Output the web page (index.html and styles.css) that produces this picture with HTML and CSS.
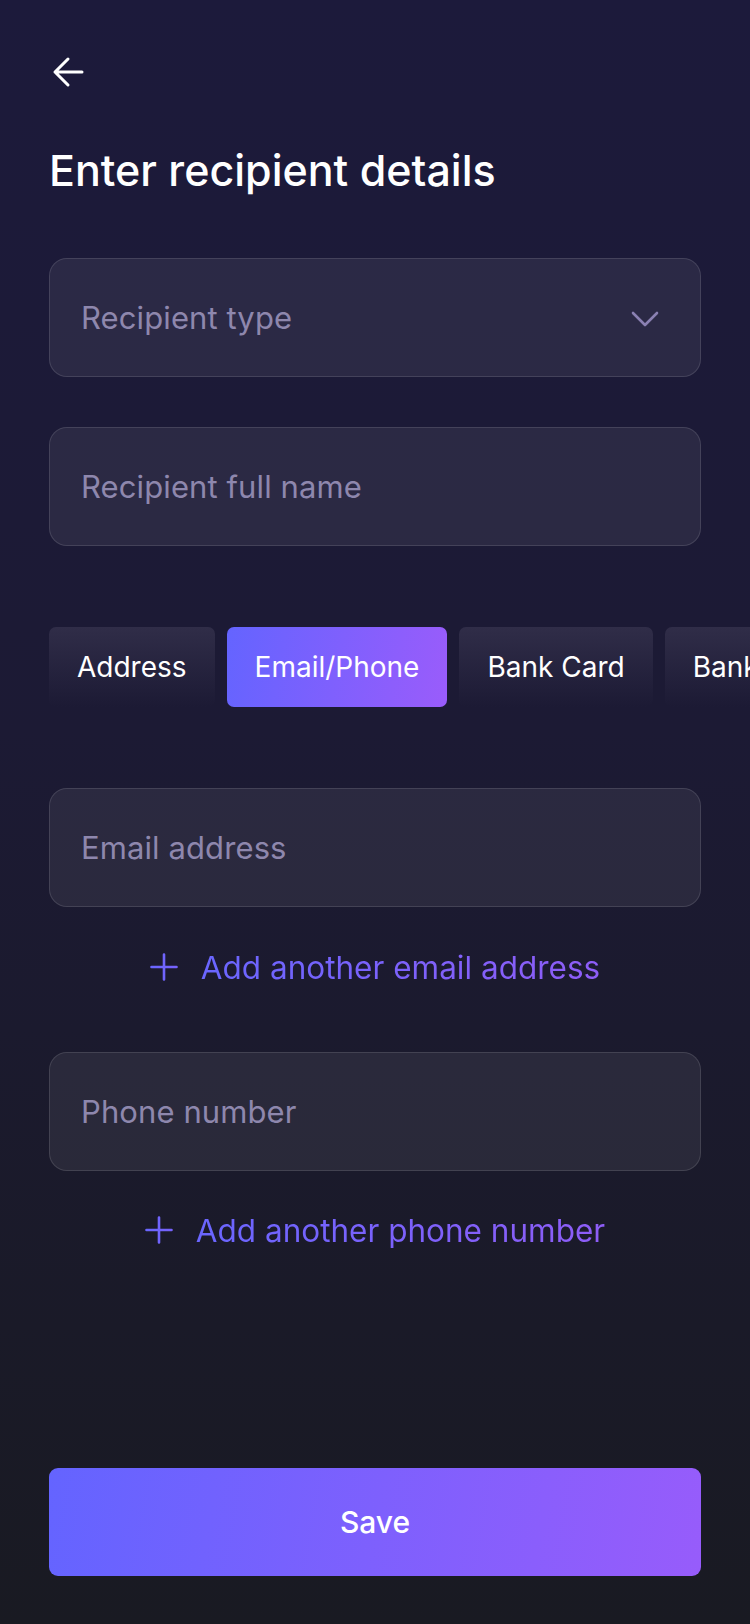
FILE: index.html
```html
<!DOCTYPE html>
<html lang="en">
<head>
<meta charset="utf-8">
<title>Enter recipient details</title>
<link rel="stylesheet" href="styles.css">
</head>
<body>
<div class="screen">
  <button class="back" aria-label="Back">
    <svg width="34" height="34" viewBox="0 0 34 34" fill="none" stroke="#ffffff" stroke-width="3" stroke-linecap="round" stroke-linejoin="round">
      <path d="M31 17H4M17 4L4 17L17 30"/>
    </svg>
  </button>

  <h1 class="title">Enter recipient details</h1>

  <div class="field field-select">
    <span class="placeholder">Recipient type</span>
    <svg class="chevron" width="30" height="18" viewBox="0 0 30 18" fill="none" stroke="#8a80b2" stroke-width="2.6" stroke-linecap="round" stroke-linejoin="round">
      <path d="M3 3L15 15L27 3"/>
    </svg>
  </div>

  <div class="field field-name">
    <span class="placeholder">Recipient full name</span>
  </div>

  <div class="tabs">
    <div class="tab">Address</div>
    <div class="tab tab-active">Email/Phone</div>
    <div class="tab">Bank Card</div>
    <div class="tab">Bank Account</div>
  </div>

  <div class="field field-email">
    <span class="placeholder">Email address</span>
  </div>

  <div class="add-link add-email">
    <svg class="plus" width="28" height="28" viewBox="0 0 28 28" fill="none" stroke-width="2.6" stroke-linecap="round">
      <defs>
        <linearGradient id="pg1" x1="0" y1="0" x2="1" y2="0">
          <stop offset="0" stop-color="#6a66ff"/>
          <stop offset="1" stop-color="#7662fc"/>
        </linearGradient>
      </defs>
      <path d="M14 1.5V26.5M1.5 14H26.5" stroke="url(#pg1)"/>
    </svg>
    <span class="add-text">Add another email address</span>
  </div>

  <div class="field field-phone">
    <span class="placeholder">Phone number</span>
  </div>

  <div class="add-link add-phone">
    <svg class="plus" width="28" height="28" viewBox="0 0 28 28" fill="none" stroke-width="2.6" stroke-linecap="round">
      <defs>
        <linearGradient id="pg2" x1="0" y1="0" x2="1" y2="0">
          <stop offset="0" stop-color="#6a66ff"/>
          <stop offset="1" stop-color="#7662fc"/>
        </linearGradient>
      </defs>
      <path d="M14 1.5V26.5M1.5 14H26.5" stroke="url(#pg2)"/>
    </svg>
    <span class="add-text">Add another phone number</span>
  </div>

  <button class="save">Save</button>
</div>
</body>
</html>
```

FILE: styles.css
```css
* {
  box-sizing: border-box;
}

html, body {
  margin: 0;
  padding: 0;
}

body {
  width: 750px;
  min-height: 1624px;
  background: linear-gradient(180deg, #1c1a3b 0%, #1c1a34 45%, #191a22 100%);
  font-family: Inter, "Noto Sans", "Liberation Sans", sans-serif;
  color: #ffffff;
  overflow: hidden;
}

.screen {
  display: flex;
  flex-direction: column;
  min-height: 1624px;
  padding: 0 49px 48px 49px;
}

.back {
  align-self: flex-start;
  margin: 55px 0 0 2px;
  padding: 0;
  width: 34px;
  height: 34px;
  border: none;
  background: none;
  display: flex;
}

.title {
  margin: 56px 0 0 0;
  font-size: 43px;
  line-height: 50px;
  font-weight: 500;
  letter-spacing: 0;
  color: #ffffff;
}

.field {
  height: 119px;
  border-radius: 18px;
  background: rgba(255, 255, 255, 0.065);
  border: 1.5px solid rgba(255, 255, 255, 0.12);
  display: flex;
  align-items: center;
  justify-content: space-between;
  padding: 0 40px 0 31px;
}

.placeholder {
  font-size: 31px;
  color: #8e87ad;
  letter-spacing: 0.1px;
}

.chevron {
  display: block;
  margin-top: 2px;
}

.field-select {
  margin-top: 63px;
}

.field-name {
  margin-top: 50px;
}

.tabs {
  margin-top: 81px;
  margin-right: -49px;
  display: flex;
  gap: 12px;
  overflow: hidden;
  height: 80px;
}

.tab {
  flex: 0 0 auto;
  height: 80px;
  padding: 0 28px;
  border-radius: 7px;
  display: flex;
  align-items: center;
  font-size: 28px;
  color: #ffffff;
  background: linear-gradient(180deg, #302d48 0%, rgba(30, 27, 54, 0) 100%);
}

.tab-active {
  background: linear-gradient(100deg, #6464ff 0%, #9a5cfb 100%);
}

.field-email {
  margin-top: 81px;
}

.add-link {
  display: flex;
  align-items: center;
  justify-content: center;
  gap: 23px;
  height: 40px;
}

.add-email {
  margin-top: 40px;
}

.add-phone {
  margin-top: 39px;
}

.plus {
  display: block;
}

.add-text {
  font-size: 31.5px;
  letter-spacing: 0;
  background: linear-gradient(90deg, #6a66ff 0%, #8e5df7 100%);
  -webkit-background-clip: text;
  background-clip: text;
  color: transparent;
}

.field-phone {
  margin-top: 65px;
}

.save {
  margin-top: auto;
  height: 108px;
  width: 100%;
  border: none;
  border-radius: 9px;
  background: linear-gradient(100deg, #6464ff 0%, #975cfb 100%);
  color: #ffffff;
  font-family: Inter, "Noto Sans", "Liberation Sans", sans-serif;
  font-size: 30px;
  font-weight: 500;
}
```
